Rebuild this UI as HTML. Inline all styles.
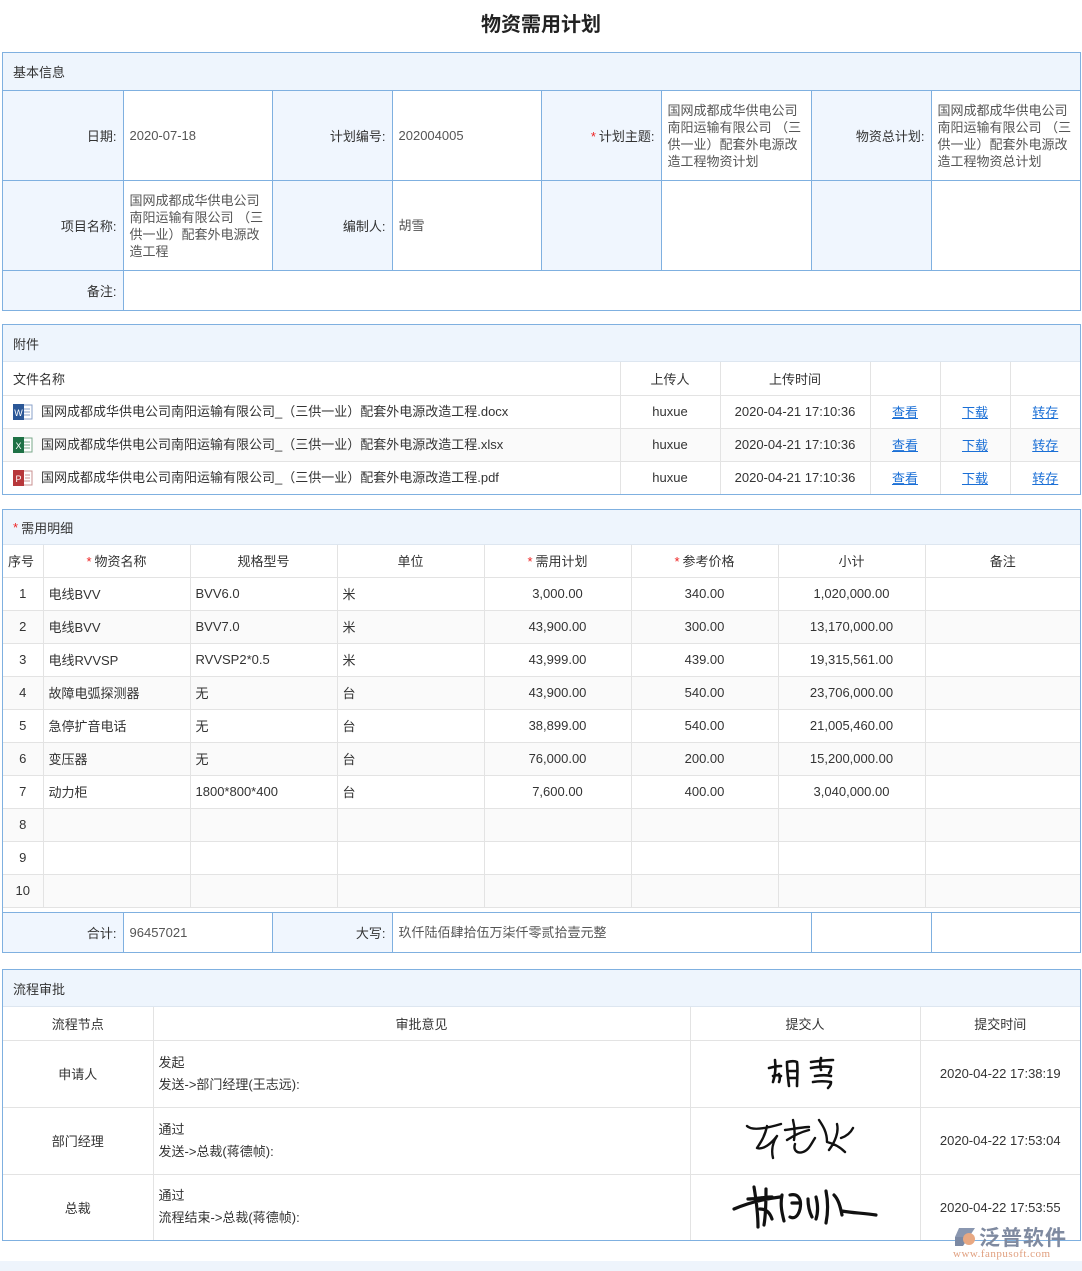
<!DOCTYPE html>
<html><head><meta charset="utf-8">
<style>
*{margin:0;padding:0;box-sizing:border-box}
body{width:1082px;height:1271px;background:#fff;font-family:"Liberation Sans","Noto Sans CJK SC",sans-serif;font-size:13px;color:#333;position:relative;overflow:hidden}
.title{position:absolute;top:8px;left:0;width:1082px;text-align:center;font-size:20px;font-weight:bold;color:#222}
.sec{position:absolute;left:2px;width:1079px;border:1px solid #7fb0e0}
.hd{background:#eef5fd;padding-left:10px;border-bottom:1px solid #dde6f0;display:flex;align-items:center}
table{border-collapse:collapse;table-layout:fixed;width:100%}
td{overflow:hidden}
.t1 td{border:1px solid #7fb0e0;vertical-align:middle}
.t1 tr td:first-child{border-left:none}
.t1 tr td:last-child{border-right:none}
.t1 tr:last-child td{border-bottom:none}
.lb{background:#f0f6fe;text-align:right;padding-right:6px}
.vl{padding:0 6px;color:#555;line-height:17px}
.tg td{border:1px solid #e3e3e3;vertical-align:middle}
.tg tr td:first-child{border-left:none}
.tg tr td:last-child{border-right:none}
.tg tr:last-child td{border-bottom:none}
.tg tr:first-child td{border-top:none}
.c{text-align:center}
.r{color:#e22;margin-right:3px}
a{color:#1a6fd6;text-decoration:underline}
.alt td{background:#fafafa}
.ico{display:inline-block;width:20px;height:18px;vertical-align:middle;margin-right:8px;position:relative;top:-1px}
</style></head><body>
<div class="title">物资需用计划</div>

<div class="sec" style="top:52px">
<div class="hd" style="height:37px;border-bottom:none">基本信息</div>
<table class="t1">
<colgroup><col style="width:120px"><col style="width:149px"><col style="width:120px"><col style="width:149px"><col style="width:120px"><col style="width:150px"><col style="width:120px"><col></colgroup>
<tr style="height:90px"><td class="lb">日期:</td><td class="vl">2020-07-18</td><td class="lb">计划编号:</td><td class="vl">202004005</td><td class="lb"><span class="r">*</span>计划主题:</td><td class="vl">国网成都成华供电公司南阳运输有限公司 （三供一业）配套外电源改造工程物资计划</td><td class="lb">物资总计划:</td><td class="vl">国网成都成华供电公司南阳运输有限公司 （三供一业）配套外电源改造工程物资总计划</td></tr>
<tr style="height:90px"><td class="lb">项目名称:</td><td class="vl">国网成都成华供电公司南阳运输有限公司 （三供一业）配套外电源改造工程</td><td class="lb">编制人:</td><td class="vl">胡雪</td><td class="lb"></td><td></td><td class="lb"></td><td></td></tr>
<tr style="height:39px"><td class="lb">备注:</td><td colspan="7"></td></tr>
</table>
</div>

<div class="sec" style="top:324px">
<div class="hd" style="height:37px">附件</div>
<table class="tg">
<colgroup><col style="width:617px"><col style="width:100px"><col style="width:150px"><col style="width:70px"><col style="width:70px"><col></colgroup>
<tr style="height:33px"><td style="padding-left:10px">文件名称</td><td class="c">上传人</td><td class="c">上传时间</td><td></td><td></td><td></td></tr>
<tr style="height:33px"><td style="padding-left:10px"><svg class="ico" viewBox="0 0 20 18"><rect x="7" y="2" width="12" height="14" fill="#fff" stroke="#8aa0c8"/><path d="M10 6h7M10 9h7M10 12h7" stroke="#8aa0c8"/><rect x="0" y="1" width="11" height="16" fill="#2b5797"/><text x="5.5" y="13" font-size="9" fill="#fff" text-anchor="middle" font-family="Liberation Sans">W</text></svg>国网成都成华供电公司南阳运输有限公司_（三供一业）配套外电源改造工程.docx</td><td class="c">huxue</td><td class="c">2020-04-21 17:10:36</td><td class="c"><a>查看</a></td><td class="c"><a>下载</a></td><td class="c"><a>转存</a></td></tr>
<tr class="alt" style="height:33px"><td style="padding-left:10px"><svg class="ico" viewBox="0 0 20 18"><rect x="7" y="2" width="12" height="14" fill="#fff" stroke="#7aa88a"/><path d="M10 6h7M10 9h7M10 12h7" stroke="#7aa88a"/><rect x="0" y="1" width="11" height="16" fill="#1e7145"/><text x="5.5" y="13" font-size="9" fill="#fff" text-anchor="middle" font-family="Liberation Sans">X</text></svg>国网成都成华供电公司南阳运输有限公司_（三供一业）配套外电源改造工程.xlsx</td><td class="c">huxue</td><td class="c">2020-04-21 17:10:36</td><td class="c"><a>查看</a></td><td class="c"><a>下载</a></td><td class="c"><a>转存</a></td></tr>
<tr style="height:33px"><td style="padding-left:10px"><svg class="ico" viewBox="0 0 20 18"><rect x="7" y="2" width="12" height="14" fill="#fff" stroke="#c89090"/><path d="M12 6h5M12 9h5M10 12h7" stroke="#c89090"/><rect x="0" y="1" width="11" height="16" fill="#b7373a"/><text x="5.5" y="13" font-size="9" fill="#fff" text-anchor="middle" font-family="Liberation Sans">P</text></svg>国网成都成华供电公司南阳运输有限公司_（三供一业）配套外电源改造工程.pdf</td><td class="c">huxue</td><td class="c">2020-04-21 17:10:36</td><td class="c"><a>查看</a></td><td class="c"><a>下载</a></td><td class="c"><a>转存</a></td></tr>
</table>
</div>

<div class="sec" style="top:509px">
<div class="hd" style="height:35px"><span class="r">*</span>需用明细</div>
<table class="tg">
<colgroup><col style="width:40px"><col style="width:147px"><col style="width:147px"><col style="width:147px"><col style="width:147px"><col style="width:147px"><col style="width:147px"><col></colgroup>
<tr style="height:32px"><td style="padding-left:5px">序号</td><td class="c"><span class="r">*</span>物资名称</td><td class="c">规格型号</td><td class="c">单位</td><td class="c"><span class="r">*</span>需用计划</td><td class="c"><span class="r">*</span>参考价格</td><td class="c">小计</td><td class="c">备注</td></tr>
<tr style="height:33px"><td class="c">1</td><td style="padding-left:5px">电线BVV</td><td style="padding-left:5px">BVV6.0</td><td style="padding-left:5px">米</td><td class="c">3,000.00</td><td class="c">340.00</td><td class="c">1,020,000.00</td><td></td></tr>
<tr class="alt" style="height:33px"><td class="c">2</td><td style="padding-left:5px">电线BVV</td><td style="padding-left:5px">BVV7.0</td><td style="padding-left:5px">米</td><td class="c">43,900.00</td><td class="c">300.00</td><td class="c">13,170,000.00</td><td></td></tr>
<tr style="height:33px"><td class="c">3</td><td style="padding-left:5px">电线RVVSP</td><td style="padding-left:5px">RVVSP2*0.5</td><td style="padding-left:5px">米</td><td class="c">43,999.00</td><td class="c">439.00</td><td class="c">19,315,561.00</td><td></td></tr>
<tr class="alt" style="height:33px"><td class="c">4</td><td style="padding-left:5px">故障电弧探测器</td><td style="padding-left:5px">无</td><td style="padding-left:5px">台</td><td class="c">43,900.00</td><td class="c">540.00</td><td class="c">23,706,000.00</td><td></td></tr>
<tr style="height:33px"><td class="c">5</td><td style="padding-left:5px">急停扩音电话</td><td style="padding-left:5px">无</td><td style="padding-left:5px">台</td><td class="c">38,899.00</td><td class="c">540.00</td><td class="c">21,005,460.00</td><td></td></tr>
<tr class="alt" style="height:33px"><td class="c">6</td><td style="padding-left:5px">变压器</td><td style="padding-left:5px">无</td><td style="padding-left:5px">台</td><td class="c">76,000.00</td><td class="c">200.00</td><td class="c">15,200,000.00</td><td></td></tr>
<tr style="height:33px"><td class="c">7</td><td style="padding-left:5px">动力柜</td><td style="padding-left:5px">1800*800*400</td><td style="padding-left:5px">台</td><td class="c">7,600.00</td><td class="c">400.00</td><td class="c">3,040,000.00</td><td></td></tr>
<tr class="alt" style="height:33px"><td class="c">8</td><td></td><td></td><td></td><td></td><td></td><td></td><td></td></tr>
<tr style="height:33px"><td class="c">9</td><td></td><td></td><td></td><td></td><td></td><td></td><td></td></tr>
<tr class="alt" style="height:33px"><td class="c">10</td><td></td><td></td><td></td><td></td><td></td><td></td><td></td></tr>
</table>
<div style="height:5px;border-top:1px solid #e3e3e3"></div>
<table class="t1" style="border-top:1px solid #7fb0e0">
<colgroup><col style="width:120px"><col style="width:149px"><col style="width:120px"><col style="width:419px"><col style="width:120px"><col></colgroup>
<tr style="height:39px"><td class="lb">合计:</td><td class="vl">96457021</td><td class="lb">大写:</td><td class="vl">玖仟陆佰肆拾伍万柒仟零贰拾壹元整</td><td></td><td></td></tr>
</table>
</div>

<div class="sec" style="top:969px">
<div class="hd" style="height:37px">流程审批</div>
<table class="tg">
<colgroup><col style="width:150px"><col style="width:537px"><col style="width:230px"><col></colgroup>
<tr style="height:33px"><td class="c">流程节点</td><td class="c">审批意见</td><td class="c">提交人</td><td class="c">提交时间</td></tr>
<tr style="height:67px"><td class="c">申请人</td><td style="padding-left:5px;line-height:22px">发起<br>发送->部门经理(王志远):</td><td class="c"><svg width="80" height="40" viewBox="0 0 80 40" fill="none" stroke="#111" stroke-width="2.6" stroke-linecap="round" stroke-linejoin="round"><path d="M4 16c4-1 8-2 12-2M10 8c1 8 0 16-2 22M8 24c3-1 6-1 8 0M14 22c1 3 1 6 0 8M22 10c0 8 1 16 2 24M22 10c4-1 8-1 10 0c1 8 0 16 0 24M24 19c3 0 5 0 7 0M24 26c3 0 5 0 7 0M46 10c8-1 16-2 22-2M56 6c-1 4-1 8 0 12M46 16c6-1 14-2 20-1c0 3-1 5-2 6M50 24c6-1 12-1 16 0M48 30c6-1 12-1 18 0c0 2-1 4-3 6"/></svg></td><td class="c">2020-04-22 17:38:19</td></tr>
<tr style="height:67px"><td class="c">部门经理</td><td style="padding-left:5px;line-height:22px">通过<br>发送->总裁(蒋德帧):</td><td class="c"><svg width="120" height="50" viewBox="0 0 120 50" fill="none" stroke="#111" stroke-width="2.4" stroke-linecap="round" stroke-linejoin="round"><path d="M2 12c4 4 14 4 34 -2M22 12c-2 10-6 16-10 22c6 2 14-4 20-12M32 22c-4 6-6 14-4 22M48 6c2 8 2 14 1 20M40 16c8-1 18-3 24-3M42 26c6-4 14-8 22-10M50 30c-2 6 2 10 8 8c6-2 8-8 12-14M74 6c4 6 8 12 8 22c8 2 14 6 18 10M92 10c2 8-2 18-8 26M96 24c6-2 10-6 12-10"/></svg></td><td class="c">2020-04-22 17:53:04</td></tr>
<tr style="height:66px"><td class="c">总裁</td><td style="padding-left:5px;line-height:22px">通过<br>流程结束->总裁(蒋德帧):</td><td class="c"><svg width="150" height="50" viewBox="0 0 150 50" fill="none" stroke="#111" stroke-width="3.2" stroke-linecap="round" stroke-linejoin="round"><path d="M4 28c14-6 30-10 46-12M24 6c2 12 4 26 4 40M36 8c0 12 0 24-2 36M18 18c8 0 16-2 24-2M30 28c6 0 10 4 12 10M52 14c-2 10 0 18 2 26M60 14c8-2 12 4 10 14c-2 8-6 10-10 8M62 22h8M78 18c0 8 2 14 4 18M86 16c2 8 2 16 0 22M96 10c2 10 2 22 0 32M104 14c4 4 6 10 8 20M112 30c10 2 22 2 34 4"/></svg></td><td class="c">2020-04-22 17:53:55</td></tr>
</table>
</div>

<div style="position:absolute;left:953px;top:1224px;width:125px;height:36px">
<svg style="position:absolute;left:0;top:2px" width="24" height="22" viewBox="0 0 24 22"><path d="M6 2h16L16 11H2z" fill="#8a97b0"/><path d="M2 11h14l-6 9H2z" fill="#7c89a3"/><circle cx="16" cy="13" r="6" fill="#e8a882"/></svg>
<span style="position:absolute;left:26px;top:-2px;font-size:21px;color:#7f8aa0;font-weight:bold;letter-spacing:1px">泛普软件</span>
<span style="position:absolute;left:0;top:24px;font-size:11px;color:#e0a080;font-family:'Liberation Serif',serif;letter-spacing:0.5px">www.fanpusoft.com</span>
</div>
<div style="position:absolute;left:0;top:1261px;width:1082px;height:10px;background:#eef4fc"></div>
</body></html>
